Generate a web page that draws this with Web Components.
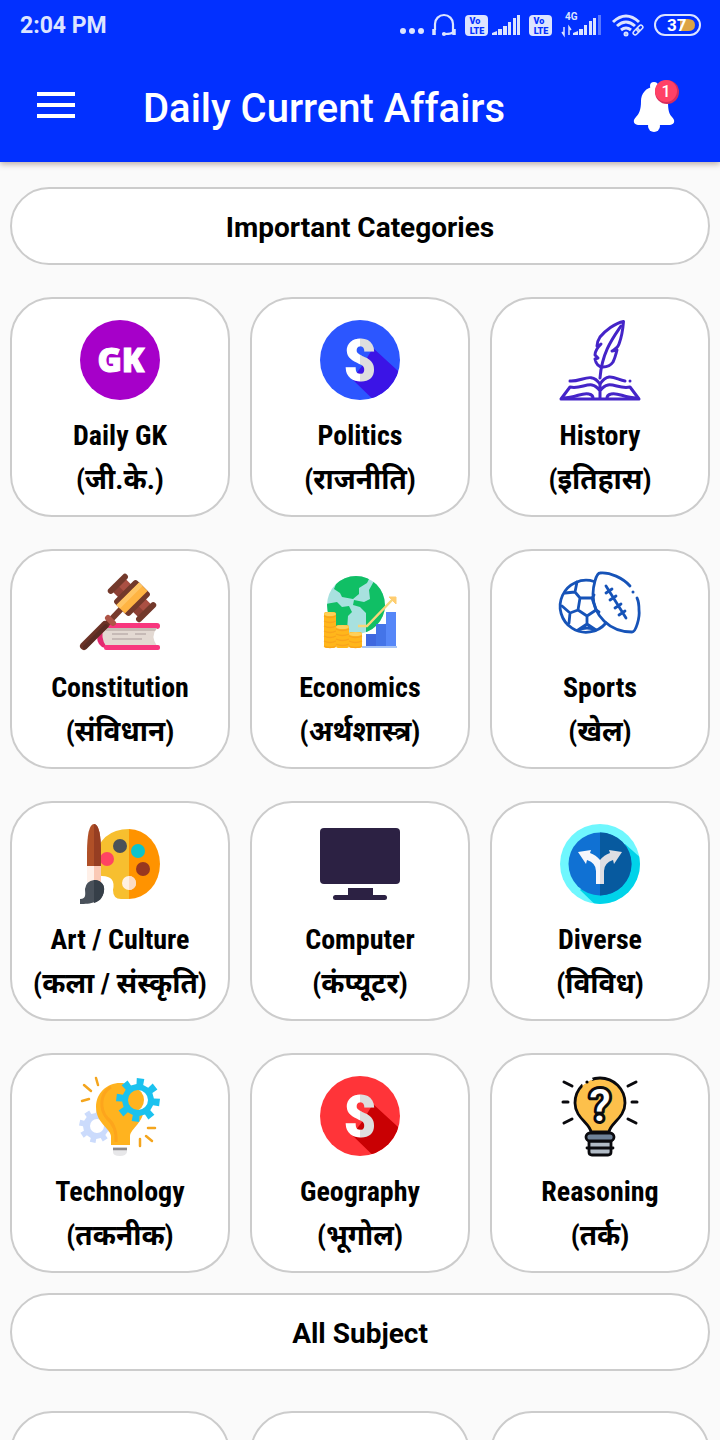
<!DOCTYPE html>
<html lang="en">
<head>
<meta charset="utf-8">
<meta name="viewport" content="width=device-width, initial-scale=1">
<title>Daily Current Affairs</title>
<style>
  html, body { margin: 0; height: 100%; }
  body { background: #fafafa; color: #000; font-family: Roboto, "Noto Sans", "Noto Sans Devanagari", sans-serif; }
</style>
</head>
<body>
<app-screen>
  <status-bar slot="top" time="2:04 PM"></status-bar>
  <app-bar slot="top">Daily Current Affairs</app-bar>

  <section-title>Important Categories</section-title>
  <card-grid>
    <category-card href="#daily-gk"><app-icon slot="icon" name="gk"></app-icon>Daily GK<span slot="local" lang="hi">(जी.के.)</span></category-card>
    <category-card href="#politics"><app-icon slot="icon" name="politics"></app-icon>Politics<span slot="local" lang="hi">(राजनीति)</span></category-card>
    <category-card href="#history"><app-icon slot="icon" name="history"></app-icon>History<span slot="local" lang="hi">(इतिहास)</span></category-card>
    <category-card href="#constitution"><app-icon slot="icon" name="constitution"></app-icon>Constitution<span slot="local" lang="hi">(संविधान)</span></category-card>
    <category-card href="#economics"><app-icon slot="icon" name="economics"></app-icon>Economics<span slot="local" lang="hi">(अर्थशास्त्र)</span></category-card>
    <category-card href="#sports"><app-icon slot="icon" name="sports"></app-icon>Sports<span slot="local" lang="hi">(खेल)</span></category-card>
    <category-card href="#art"><app-icon slot="icon" name="art"></app-icon>Art / Culture<span slot="local" lang="hi">(कला / संस्कृति)</span></category-card>
    <category-card href="#computer"><app-icon slot="icon" name="computer"></app-icon>Computer<span slot="local" lang="hi">(कंप्यूटर)</span></category-card>
    <category-card href="#diverse"><app-icon slot="icon" name="diverse"></app-icon>Diverse<span slot="local" lang="hi">(विविध)</span></category-card>
    <category-card href="#technology"><app-icon slot="icon" name="technology"></app-icon>Technology<span slot="local" lang="hi">(तकनीक)</span></category-card>
    <category-card href="#geography"><app-icon slot="icon" name="geography"></app-icon>Geography<span slot="local" lang="hi">(भूगोल)</span></category-card>
    <category-card href="#reasoning"><app-icon slot="icon" name="reasoning"></app-icon>Reasoning<span slot="local" lang="hi">(तर्क)</span></category-card>
  </card-grid>
  <section-title>All Subject</section-title>
  <card-grid class="subjects">
    <category-card href="#subject-1"></category-card>
    <category-card href="#subject-2"></category-card>
    <category-card href="#subject-3"></category-card>
  </card-grid>
</app-screen>

<script>
const shadow = (el, html) => { el.attachShadow({ mode: 'open' }).innerHTML = html; };

/* Toothed wheel outline centred on (cx, cy). */
function gear(cx, cy, inner, outer, teeth, turn) {
  const pts = [];
  const step = Math.PI * 2 / teeth;
  for (let i = 0; i < teeth; i++) {
    const a = turn + i * step;
    [[-.27, inner], [-.22, outer], [.22, outer], [.27, inner]].forEach(([t, r]) =>
      pts.push((cx + r * Math.cos(a + t * step)).toFixed(1) + ' ' + (cy + r * Math.sin(a + t * step)).toFixed(1)));
  }
  return 'M' + pts.join('L') + 'Z';
}
const ring = (cx, cy, r) => `M${cx - r} ${cy}a${r} ${r} 0 1 0 ${2 * r} 0a${r} ${r} 0 1 0 ${-2 * r} 0Z`;

const letterS = (disc, shade) => `
  <defs>
    <linearGradient id="fold" gradientUnits="userSpaceOnUse" x1="0" y1="0" x2="80" y2="0"><stop offset=".5" stop-color="#fff"/><stop offset=".5" stop-color="#dedede"/></linearGradient>
    <clipPath id="disc"><circle cx="40" cy="40" r="40"/></clipPath>
  </defs>
  <circle cx="40" cy="40" r="40" fill="${disc}"/>
  <path clip-path="url(#disc)" d="M53 28L90 62L66 92L32 59L42 46Z" fill="${shade}"/>
  <text x="40" y="61" text-anchor="middle" font-family="Roboto Condensed, Roboto" font-weight="900" font-size="59" fill="url(#fold)">S</text>`;

const coins = (x, y, w, n) => {
  let s = `<rect x="${x}" y="${y}" width="${w}" height="${76 - y}" rx="2" fill="#ffb61b"/>`;
  for (let i = 0; i < n; i++) s += `<path d="M${x} ${y + 4 + i * 5}q${w / 2} 3 ${w} 0" stroke="#f9a41b" stroke-width="1.300" fill="none"/>`;
  return s + `<ellipse cx="${x + w / 2}" cy="${y + 2}" rx="${w / 2}" ry="2" fill="#ffd05a"/>`;
};

const ICONS = {
  gk: `<circle cx="40" cy="40" r="40" fill="#a600c9"/>
    <text x="41" y="52" text-anchor="middle" font-family="Open Sans" font-weight="800" font-size="33" fill="#fff" stroke="#fff" stroke-width="1">GK</text>`,
  politics: letterS('#2c56ff', '#3b14e6'),
  geography: letterS('#ff3439', '#c90003'),
  history: `<g fill="none" stroke="#4424c8" stroke-width="3" stroke-linecap="round" stroke-linejoin="round">
    <path d="M63.500 1.500C55 3 45 11 40 17C38 20 37 23 37 26C38 26 40 25 41 24C38 27 35 31 35 35L38 38L35 39C36 44 39 47 43 47C48 47 51 45 53 42C55 38 56 34 57 30L52 31C55 29 58 28 59 24C62 16 63 8 63.500 1.500Z"/>
    <path d="M61 6C53 18 42 32 40 58"/>
    <path d="M10 61C22 62 31 51 40 64C49 51 56 60 65 61"/>
    <path d="M10 67C23 70 31 58 40 71C49 58 57 70 70 67L79 79H1ZM40 64V78"/>
    <path d="M3 78C16 78 22 72 29 74Q33 75 33 78M77 78C64 78 58 72 51 74Q47 75 47 78"/></g>
    <circle cx="70" cy="61" r="1.500" fill="#4424c8"/>`,
  constitution: `<rect x="25" y="51" width="55" height="6" rx="3" fill="#f8367e"/>
    <path d="M25 57L17 64Q17 74 25 76L30 70Z" fill="#e32a70"/>
    <path d="M24 56H77Q70 64 77 74H26Q20 65 24 56Z" fill="#e3d9d2"/>
    <path d="M24 56H77L75 59H26Z" fill="#c7bbb5"/>
    <path d="M32 62H48M55 62H66M32 67H62" stroke="#bdb0ad" stroke-width="1.500"/>
    <rect x="24" y="73" width="56" height="5" rx="2" fill="#f8367e"/>
    <path d="M22 57L44 34" stroke="#783b2c" stroke-width="6"/>
    <path d="M4 74L25 53" stroke="#6b3226" stroke-width="8" stroke-linecap="round"/>
    <path d="M5 75L26 54" stroke="#592c23" stroke-width="4" stroke-linecap="round"/>
    <path d="M28 46L33 51" stroke="#ae5547" stroke-width="6" stroke-linecap="round"/>
    <g transform="translate(52 26) rotate(45)">
      <rect x="-19" y="-9" width="38" height="18" fill="#aa5043"/><rect x="-19" y="1" width="38" height="8" fill="#8d4035"/>
      <rect x="-23" y="-13" width="6" height="26" rx="3" fill="#73392b"/><rect x="17" y="-13" width="6" height="26" rx="3" fill="#73392b"/>
      <rect x="-11" y="-16" width="22" height="32" rx="3" fill="#73392b"/>
      <rect x="-6" y="-16" width="12" height="32" fill="#ffb443"/><rect x="-6" y="-16" width="5" height="32" fill="#ffc565"/>
    </g>`,
  economics: `<defs><clipPath id="globe"><circle cx="36" cy="33" r="29"/></clipPath></defs>
    <g clip-path="url(#globe)"><rect width="80" height="70" fill="#a8e1df"/>
      <path d="M14 17L20 21L22 25L33 27L39 22V16L47 11L50 5L40 0L20 2ZM54 9L58 10L70 30L60 62L46 62V41L40 35L33 33L34 28L44 30L50 27L49 18ZM5 32L17 30L22 35L29 34L32 40L28 44L27 58L0 60Z" fill="#10bf65"/></g>
    ${coins(4, 40, 12, 7)}${coins(16, 53, 13, 4)}${coins(29, 60, 13, 3)}
    <path d="M46 62H56V74H46Z" fill="#3f68df"/><path d="M56 52H66V74H56Z" fill="#4474e8"/><path d="M66 40H76V74H66Z" fill="#5687f8"/>
    <path d="M42 74H77V76H42Z" fill="#a9c5f5"/>
    <path d="M38 54H47L73 27" fill="none" stroke="#f6d77a" stroke-width="2.500"/><path d="M69 25L76 25V32Z" fill="#ffcd70" stroke="#ffcd70"/>`,
  sports: `<g fill="none" stroke="#1653b8" stroke-width="2.800" stroke-linecap="round" stroke-linejoin="round">
    <path d="M34 9.500A26 26 0 1 0 46 51"/>
    <path d="M20 26H32L36 38L27 44L18 38ZM20 26L15 20L17 10M15 20L5 21M32 26L34 23M18 38L10 41L2 34M10 41L9 51M27 44V52L18 58M27 52L36 58M36 38L39 40M18 58Q27 54 36 58"/>
    <path d="M70 14C63 6 50 0 40 1C36 1 33 15 33 22C33 44 50 60 72 60C76 60 80 45 79 38Q79 30 77 26"/>
    <path d="M46 14L66 46M46 21L52 17M50 28L56 24M55 36L61 32M59 43L65 39"/></g>
    <circle cx="73" cy="20" r="1.500" fill="#1653b8"/>`,
  art: `<path d="M49 5V75H41Q33 75 33 66Q36 52 22 52Q14 52 14 36Q20 5 49 5Z" fill="#f7bf2f"/>
    <path d="M49 5A31 35 0 0 1 49 75Z" fill="#ff9300"/>
    <circle cx="40" cy="22" r="7" fill="#4a5158"/><circle cx="58" cy="27" r="7" fill="#0bc3cb"/><circle cx="27" cy="35" r="7" fill="#ff4463"/>
    <circle cx="63" cy="45" r="7" fill="#98371f"/><circle cx="49" cy="59" r="7" fill="#fff1e2"/><path d="M49 52A7 7 0 0 1 49 66Z" fill="#fcdcc4"/>
    <path d="M5 40H21V60H5Z" fill="#fff"/>
    <path d="M7 43V30Q7 0 14 0Q21 0 21 30V43Z" fill="#b05027"/><path d="M14 0Q21 0 21 30V43H14Z" fill="#963e22"/>
    <path d="M7 42H21V58H7Z" fill="#fff0e8"/><path d="M14 42H21V58H14Z" fill="#fac9b5"/>
    <path d="M14 56C22 56 25 62 24 67C22 79 10 80 0 80V75C7 75 5 69 5 65Q6 57 14 56Z" fill="#49515a"/><path d="M14 56C22 56 25 62 24 67C23 75 18 78 14 79Z" fill="#363f48"/>`,
  computer: `<rect y="4" width="80" height="56" rx="4" fill="#2c2143"/><path d="M28 64H53V73H28Z" fill="#2c2143"/><rect x="13" y="71" width="54" height="5" rx="2.500" fill="#2c2143"/>`,
  diverse: `<defs><clipPath id="disc"><circle cx="40" cy="40" r="40"/></clipPath></defs>
    <circle cx="40" cy="40" r="40" fill="#6ff7fe"/><path clip-path="url(#disc)" d="M65 20L90 42V90H45L20 66Z" fill="#00d3e9"/>
    <circle cx="40" cy="40" r="31.500" fill="#1071d3"/><path d="M40 8.500a31.500 31.500 0 0 1 0 63Z" fill="#075a9f"/>
    <path d="M18 28L31 26L30 29Q36 31 40 36V60H36V47Q36 39 27 36L26 40Z" fill="#f6f6fb"/>
    <path d="M62 28L49 26L50 29Q44 31 40 36V60H44V47Q44 39 53 36L54 40Z" fill="#dedee3"/>`,
  technology: `<path fill-rule="evenodd" d="${gear(16, 50, 13, 17, 8, .2)}${ring(17, 50, 7)}" fill="#cbdbfc"/>
    <path d="M31 69V60C30 52 16 47 16 31C16 17 27 7 40 7C53 7 64 17 64 31C64 47 51 52 50 60V69Z" fill="#ffb31f"/>
    <path d="M31 11C19 18 20 34 27 42Q37 50 36 66" fill="none" stroke="#fda51c" stroke-width="3"/>
    <circle cx="58" cy="24" r="11" fill="#fff"/><ellipse cx="55" cy="24" rx="9" ry="11" fill="#ffb31f"/>
    <path fill-rule="evenodd" d="${gear(58, 24, 16, 22, 8, .12)}${ring(58, 24, 10)}" fill="#1bc2ef"/>
    <path d="M33 71H47V76Q46 80 40 80Q33 80 33 76Z" fill="#e7e7e9"/><path d="M33 73H47" stroke="#8e8b8c" stroke-width="2.500"/>
    <path d="M4 9L11 15M16 2L18 9M2 25L9 23M68 52H75M66 60L72 65M60 63V70" stroke="#f4a51d" stroke-width="2.500" stroke-linecap="round"/>`,
  reasoning: `<g stroke="#0a0a0e" stroke-width="2.800" stroke-linecap="round" stroke-linejoin="round">
    <path d="M31 56C30 47 15 42 15 27A25 25 0 0 1 65 27C65 42 50 47 49 56Z" fill="#fdc04b"/>
    <path d="M29 65H51V76Q51 79 48 79H32Q29 79 29 76Z" fill="#b1bbc6"/><path d="M27 72H53"/>
    <rect x="26" y="57" width="28" height="8" rx="4" fill="#6e8197"/>
    <path d="M4 6L12 10M3 26H8M4 47L12 43M76 6L68 10M77 26H72M76 47L68 43" stroke-width="3"/></g>
    <path d="M22 8L32 2" stroke="#fff" stroke-width="4"/><path d="M23 11L32 5" stroke="#fdc04b" stroke-width="3"/><circle cx="27" cy="6" r="1.600"/>
    <text x="40" y="45" text-anchor="middle" font-family="Roboto" font-weight="500" font-size="44" fill="#fff" stroke="#0a0a0e" stroke-width="6" stroke-linejoin="round" paint-order="stroke">?</text>`
};

customElements.define('app-icon', class extends HTMLElement {
  connectedCallback() {
    shadow(this, `<style>:host{display:block;width:80px;height:80px}svg{display:block;width:100%;height:100%;overflow:visible}</style>
      <svg viewBox="0 0 80 80" aria-hidden="true">${ICONS[this.getAttribute('name')]}</svg>`);
  }
});

customElements.define('app-screen', class extends HTMLElement {
  constructor() {
    super();
    shadow(this, `<style>
      :host{display:flex;flex-direction:column;height:100vh;background:#fafafa}
      header{flex:none;position:relative;z-index:1;background:#0230ff;box-shadow:0 2px 6px rgba(60,20,0,.35)}
      main{flex:1;min-height:0;overflow:hidden auto;scrollbar-width:none;padding:25px 10px 20px;box-sizing:border-box}
      main::-webkit-scrollbar{display:none}
    </style><header><slot name="top"></slot></header><main><slot></slot></main>`);
  }
});

const volte = `<rect y="5" width="23" height="21" rx="4" fill="#dce4ff"/>
  <g font-size="9" font-weight="900" fill="#0230ff" text-anchor="middle"><text x="10" y="14">Vo</text><text x="12" y="24">LTE</text></g>`;

customElements.define('status-bar', class extends HTMLElement {
  connectedCallback() {
    shadow(this, `<style>
      :host{display:flex;justify-content:space-between;align-items:center;height:50px;padding:0 19px 0 20px;color:#dce4ff;font-size:23px;font-weight:700}
      .icons{display:flex;gap:8px}
      svg{display:block;font-family:Roboto,sans-serif}
    </style>
    <time>${this.getAttribute('time')}</time>
    <div class="icons">
      <svg width="24" height="30" fill="#dce4ff"><circle cx="3" cy="21" r="3"/><circle cx="12" cy="21" r="3"/><circle cx="21" cy="21" r="3"/></svg>
      <svg width="25" height="30" fill="none" stroke="#dce4ff" stroke-width="2.200"><path d="M3 20V14A9 9 0 0 1 21 14V20V22Q20 24 13 24"/><path d="M2 19V25M22 19V25" stroke-width="3.500"/><circle cx="12" cy="24" r="1"/></svg>
      <svg width="56" height="30">${volte}<path d="M27 25V23L32 21V25ZM33 19H37V25H33ZM38 16H42V25H38ZM43 12H46V25H43ZM48 8H51V25H48ZM52 5H55V25H52Z" fill="#dce4ff"/></svg>
      <svg width="24" height="30">${volte}</svg>
      <svg width="42" height="30" fill="#dce4ff"><text x="4" y="10" font-size="10" font-weight="700">4G</text>
        <path d="M3 17V25L1 22M8 25V17L10 20" fill="none" stroke="#dce4ff" stroke-width="1.500"/>
        <path d="M12 25V23L17 21V25ZM18 19H22V25H18ZM23 15H26V25H23ZM28 11H31V25H28ZM32 8H35V25H32Z"/><path d="M37 5H40V25H37Z" opacity=".4"/></svg>
      <svg width="35" height="30" fill="none" stroke="#dce4ff" stroke-width="3"><path d="M2 12Q15 0 28 12M6 16Q15 8 24 16M10 20Q15 16 20 20"/><circle cx="15" cy="24" r="1"/>
        <g stroke="#0230ff" stroke-width="5" transform="rotate(-45 27 20)"><path d="M21 20H33"/></g>
        <g stroke-width="1.500" transform="rotate(-45 27 20)"><rect x="21" y="18" width="7" height="4" rx="2"/><rect x="26" y="18" width="7" height="4" rx="2"/></g></svg>
      <svg width="47" height="30"><rect x="1" y="5" width="45" height="20" rx="10" fill="none" stroke="#dce4ff" stroke-width="2"/><path d="M26 9H34Q41 9 41 15Q41 21 34 21H26Z" fill="#dda344"/>
        <text x="13" y="21" font-size="17" font-weight="700" fill="#fff">37</text></svg>
    </div>`);
  }
});

customElements.define('app-bar', class extends HTMLElement {
  constructor() {
    super();
    shadow(this, `<style>
      :host{display:flex;align-items:center;height:112px;padding:0 34px;color:#fff}
      button{display:block;padding:0;border:0;background:none;color:inherit}
      svg{display:block;font-family:Roboto,sans-serif}
      h1{flex:1;margin:0 0 0 64px;padding-top:6px;font-size:40px;line-height:48px;font-weight:500;white-space:nowrap}
    </style>
    <button aria-label="Menu"><svg width="45" height="40"><path d="M3 8H41M3 19H41M3 30H41" stroke="#fff" stroke-width="4"/></svg></button>
    <h1><slot></slot></h1>
    <button aria-label="Notifications"><svg width="53" height="52">
      <g fill="#fff"><circle cx="21" cy="6" r="4"/><circle cx="21" cy="46" r="6"/>
      <path d="M21 7C13 7 8 14 8 21C8 30 6 34 3 37C-1 41 1 45 5 45H37C41 45 43 41 39 37C36 34 35 30 35 21C35 14 29 7 21 7Z"/></g>
      <circle cx="34" cy="12" r="12" fill="#d62b5c"/><circle cx="33" cy="11" r="11" fill="#ff4166"/>
      <text x="33" y="17" text-anchor="middle" font-size="16" font-weight="500" fill="#fff">1</text></svg></button>`);
  }
});

customElements.define('section-title', class extends HTMLElement {
  constructor() {
    super();
    shadow(this, `<style>
      :host{display:block;box-sizing:border-box;height:78px;border:2px solid #ccc;border-radius:40px;background:#fff}
      h2{margin:0;padding-top:4px;font-size:28px;line-height:70px;font-weight:700;text-align:center}
    </style><h2><slot></slot></h2>`);
  }
});

customElements.define('card-grid', class extends HTMLElement {
  constructor() {
    super();
    shadow(this, `<style>
      :host{display:grid;grid-template-columns:repeat(3,minmax(0,1fr));gap:32px 20px;margin:32px 0 20px}
      :host(.subjects){margin-top:40px}
    </style><slot></slot>`);
  }
});

customElements.define('category-card', class extends HTMLElement {
  connectedCallback() {
    shadow(this, `<style>
      :host{display:block}
      a{display:flex;flex-direction:column;align-items:center;box-sizing:border-box;min-height:220px;padding:21px 4px 13px;border:2px solid #ccc;border-radius:42px;background:#fff;color:inherit;text-decoration:none;
        font-family:"Roboto Condensed",Roboto,"Noto Sans","Noto Sans Devanagari",sans-serif;font-weight:700;font-size:28px;line-height:44px;white-space:nowrap}
      .name{margin-top:14px}
    </style><a href="${this.getAttribute('href')}"><slot name="icon"></slot><span class="name"><slot></slot></span><slot name="local"></slot></a>`);
  }
});
</script>
</body>
</html>
